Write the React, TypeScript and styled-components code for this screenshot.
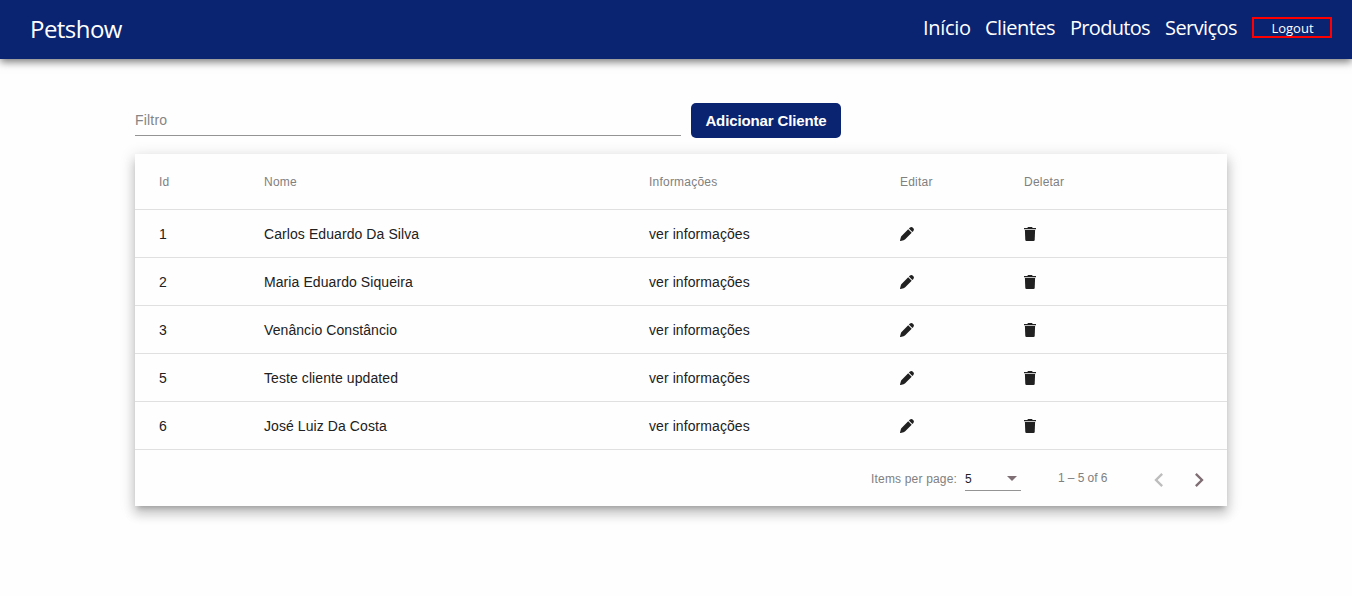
import React from "react";
import styled, { createGlobalStyle } from "styled-components";

const GlobalStyle = createGlobalStyle`
  * { box-sizing: border-box; }
  body {
    margin: 0;
    background: #fefefe;
    font-family: "Liberation Sans", Arial, sans-serif;
    color: rgba(0, 0, 0, 0.87);
  }
`;

const Page = styled.div`
  display: flow-root;
  min-height: 100vh;
`;

const Header = styled.header`
  display: flex;
  align-items: center;
  justify-content: space-between;
  height: 59px;
  padding: 0 20px 2px 30px;
  background: #0a2472;
  color: #fff;
  font-family: "Open Sans", "Noto Sans", sans-serif;
  box-shadow: 0 3px 8px rgba(0, 0, 0, 0.52);
`;

const Brand = styled.span`
  font-size: 24px;
  line-height: 32px;
  letter-spacing: -0.55px;
`;

const Nav = styled.nav`
  display: flex;
  align-items: center;
  gap: 15px;
  height: 30px;
  padding-bottom: 3px;
`;

const NavLink = styled.a<{ $width: number; $spacing: number }>`
  width: ${(p) => p.$width}px;
  padding-top: 1px;
  font-size: 20px;
  line-height: 28px;
  letter-spacing: ${(p) => p.$spacing}px;
  white-space: nowrap;
`;

const LogoutButton = styled.button`
  width: 80px;
  height: 21px;
  margin: 1px 0 0;
  padding: 1px 0 0 1px;
  border: 2px solid #f00;
  background: transparent;
  color: #fff;
  font: 13px/16px "Open Sans", "Noto Sans", sans-serif;
`;

const Main = styled.main`
  width: 1092px;
  margin: 44px 0 0 135px;
`;

const Toolbar = styled.div`
  display: flex;
  gap: 10px;
  height: 35px;
  margin-bottom: 16px;
`;

const FilterField = styled.input`
  width: 546px;
  height: 33px;
  padding: 2px 0 0;
  border: 0;
  border-bottom: 1px solid #949494;
  outline: 0;
  background: transparent;
  font: 14px "Liberation Sans", Arial, sans-serif;
  letter-spacing: 0.2px;
  &::placeholder { color: #858585; opacity: 1; }
`;

const AddButton = styled.button`
  width: 150px;
  height: 35px;
  padding: 0;
  border: 0;
  border-radius: 5px;
  background: #0a2472;
  color: #fff;
  font: bold 15px "Liberation Sans", Arial, sans-serif;
  letter-spacing: -0.13px;
`;

const Card = styled.section`
  height: 352px;
  background: #fefefe;
  box-shadow: 0 5px 5px -3px rgba(0, 0, 0, 0.2), 0 8px 10px 1px rgba(0, 0, 0, 0.14),
    0 3px 14px 2px rgba(0, 0, 0, 0.12);
`;

const Row = styled.div<{ $head?: boolean }>`
  display: grid;
  grid-template-columns: 105px 385px 251px 124px 1fr;
  align-items: center;
  height: ${(p) => (p.$head ? 56 : 48)}px;
  padding-left: 24px;
  border-bottom: 1px solid #e0e0e0;
  font-size: ${(p) => (p.$head ? 12 : 14)}px;
  color: ${(p) => (p.$head ? "#808080" : "#212121")};
  letter-spacing: ${(p) => (p.$head ? 0.22 : 0.08)}px;
`;

const Cell = styled.div`
  display: flex;
  align-items: center;
`;

const Paginator = styled.footer`
  display: flex;
  align-items: center;
  height: 56px;
  padding: 2px 8px 0 736px;
  font-size: 12px;
  color: #808080;
`;

const PageLabel = styled.span`
  width: 94px;
  letter-spacing: 0.18px;
`;

const PageSelect = styled.div`
  display: flex;
  align-items: center;
  justify-content: space-between;
  width: 56px;
  height: 24px;
  padding-right: 4px;
  border-bottom: 1px solid #949494;
  color: #212121;
`;

const Range = styled.span`
  width: 81px;
  margin: 0 0 2px 37px;
  letter-spacing: -0.08px;
`;

const PageButton = styled.button<{ $disabled?: boolean }>`
  display: flex;
  align-items: center;
  justify-content: center;
  width: 40px;
  height: 40px;
  margin-top: 2px;
  padding: 0;
  border: 0;
  background: transparent;
  color: ${(p) => (p.$disabled ? "#bdbdbd" : "#806e75")};
`;

const links = [
  { label: "Início", width: 47, spacing: -0.3 },
  { label: "Clientes", width: 70, spacing: -0.5 },
  { label: "Produtos", width: 80, spacing: -0.7 },
  { label: "Serviços", width: 72, spacing: -0.58 },
];

const clients = [
  { id: 1, name: "Carlos Eduardo Da Silva" },
  { id: 2, name: "Maria Eduardo Siqueira" },
  { id: 3, name: "Venâncio Constâncio" },
  { id: 5, name: "Teste cliente updated" },
  { id: 6, name: "José Luiz Da Costa" },
];

const PencilIcon = () => (
  <svg width="14" height="14" viewBox="0 0 14 14" fill="currentColor">
    <path d="M8.2 2.3l3.5 3.5L5.2 12.2Q4.5 12.9 3.6 13.2L.6 14Q0 14 0 13.4L.8 10.5Q1 9.5 1.8 8.7z" />
    <path d="M8.9 1.6l.8-.8Q11.5-.6 13.1.9T13.2 4.3l-.8.8z" />
  </svg>
);

const TrashIcon = () => (
  <svg width="12" height="14" viewBox="0 0 12 14" fill="currentColor">
    <path d="M0 1h3.3L4 0h4l.7 1H12v1.3H0z" />
    <path d="M.9 3.1h10.2l-.4 9.9Q10.6 14 9.6 14H2.4Q1.4 14 1.3 13z" />
  </svg>
);

export default function App() {
  return (
    <Page>
      <GlobalStyle />
      <Header>
        <Brand>Petshow</Brand>
        <Nav>
          {links.map((l) => (
            <NavLink key={l.label} $width={l.width} $spacing={l.spacing}>{l.label}</NavLink>
          ))}
          <LogoutButton>Logout</LogoutButton>
        </Nav>
      </Header>
      <Main>
        <Toolbar>
          <FilterField placeholder="Filtro" />
          <AddButton>Adicionar Cliente</AddButton>
        </Toolbar>
        <Card>
          <Row $head>
            <Cell>Id</Cell>
            <Cell>Nome</Cell>
            <Cell>Informações</Cell>
            <Cell>Editar</Cell>
            <Cell>Deletar</Cell>
          </Row>
          {clients.map((c) => (
            <Row key={c.id}>
              <Cell>{c.id}</Cell>
              <Cell>{c.name}</Cell>
              <Cell>ver informações</Cell>
              <Cell><PencilIcon /></Cell>
              <Cell><TrashIcon /></Cell>
            </Row>
          ))}
          <Paginator>
            <PageLabel>Items per page:</PageLabel>
            <PageSelect>
              5
              <svg width="10" height="5" viewBox="0 0 10 5"><path d="M0 0h10L5 5z" fill="#806e75" /></svg>
            </PageSelect>
            <Range>1 – 5 of 6</Range>
            <PageButton $disabled aria-label="Previous page">
              <svg width="28" height="28" viewBox="0 0 24 24" fill="currentColor">
                <path d="M15.41 7.41L14 6l-6 6 6 6 1.41-1.41L10.83 12z" />
              </svg>
            </PageButton>
            <PageButton aria-label="Next page">
              <svg width="28" height="28" viewBox="0 0 24 24" fill="currentColor">
                <path d="M10 6L8.59 7.41 13.17 12l-4.58 4.59L10 18l6-6z" />
              </svg>
            </PageButton>
          </Paginator>
        </Card>
      </Main>
    </Page>
  );
}
